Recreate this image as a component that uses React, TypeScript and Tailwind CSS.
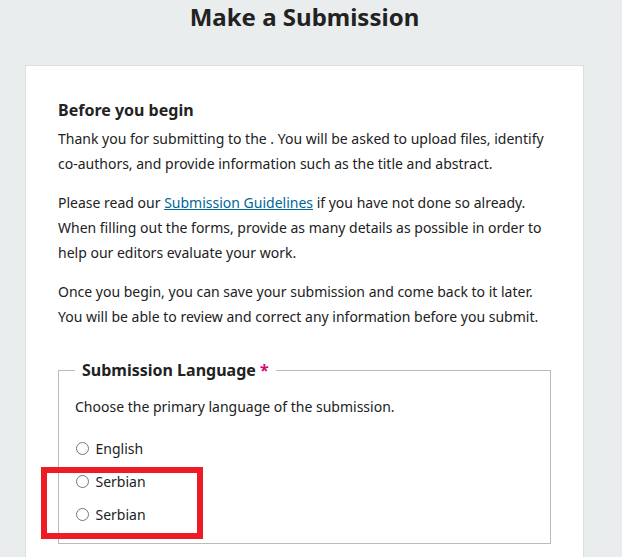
import React from 'react';

const languages = ['English', 'Serbian', 'Serbian'];

export default function App() {
  return (
    <div className="min-h-[557px] bg-[#eaedee] pl-[25px] pr-[38px] font-['Noto_Sans',sans-serif] text-[#222222] relative">
      <h1 className="pt-0 text-center text-[24px] font-bold leading-[34px]">Make a Submission</h1>

      {/* Card */}
      <div className="mt-[31px] border border-[#dddddd] bg-white px-[32px] pt-[32px] pb-10">
        <h2 className="text-[16px] font-bold leading-[24px]">Before you begin</h2>
        <p className="mt-[4px] text-[14px] leading-[25px]">
          Thank you for submitting to the . You will be asked to upload files, identify co-authors, and provide
          information such as the title and abstract.
        </p>
        <p className="mt-[14px] text-[14px] leading-[25px]">
          Please read our{' '}
          <a href="#" className="text-[#006798] underline">
            Submission Guidelines
          </a>{' '}
          if you have not done so already. When filling out the forms, provide as many details as possible in order to
          help our editors evaluate your work.
        </p>
        <p className="mt-[14px] text-[14px] leading-[25px]">
          Once you begin, you can save your submission and come back to it later. You will be able to review and
          correct any information before you submit.
        </p>

        {/* Language fieldset */}
        <fieldset className="mt-[29px] border border-[#bbbbbb] px-[16px] pb-[12px]">
          <legend className="ml-0 px-[7px] text-[16px] font-bold leading-[24px]">
            Submission Language <span className="text-[#d00a6c]">*</span>
          </legend>
          <p className="mt-[12px] text-[14px] leading-[25px]">Choose the primary language of the submission.</p>
          <div className="mt-[13px] flex flex-col">
            {languages.map((lang, i) => (
              <label key={i} className="flex h-[33px] items-center gap-[7px] text-[14px]">
                <span className="ml-[0.5px] h-[13px] w-[13px] rounded-full border border-[#767676] bg-white" />
                <span>{lang}</span>
              </label>
            ))}
          </div>
        </fieldset>
      </div>

      {/* Annotation highlight */}
      <div className="pointer-events-none absolute left-[41px] top-[467px] h-[72px] w-[162px] border-[6px] border-[#ed1c24]" />
    </div>
  );
}
